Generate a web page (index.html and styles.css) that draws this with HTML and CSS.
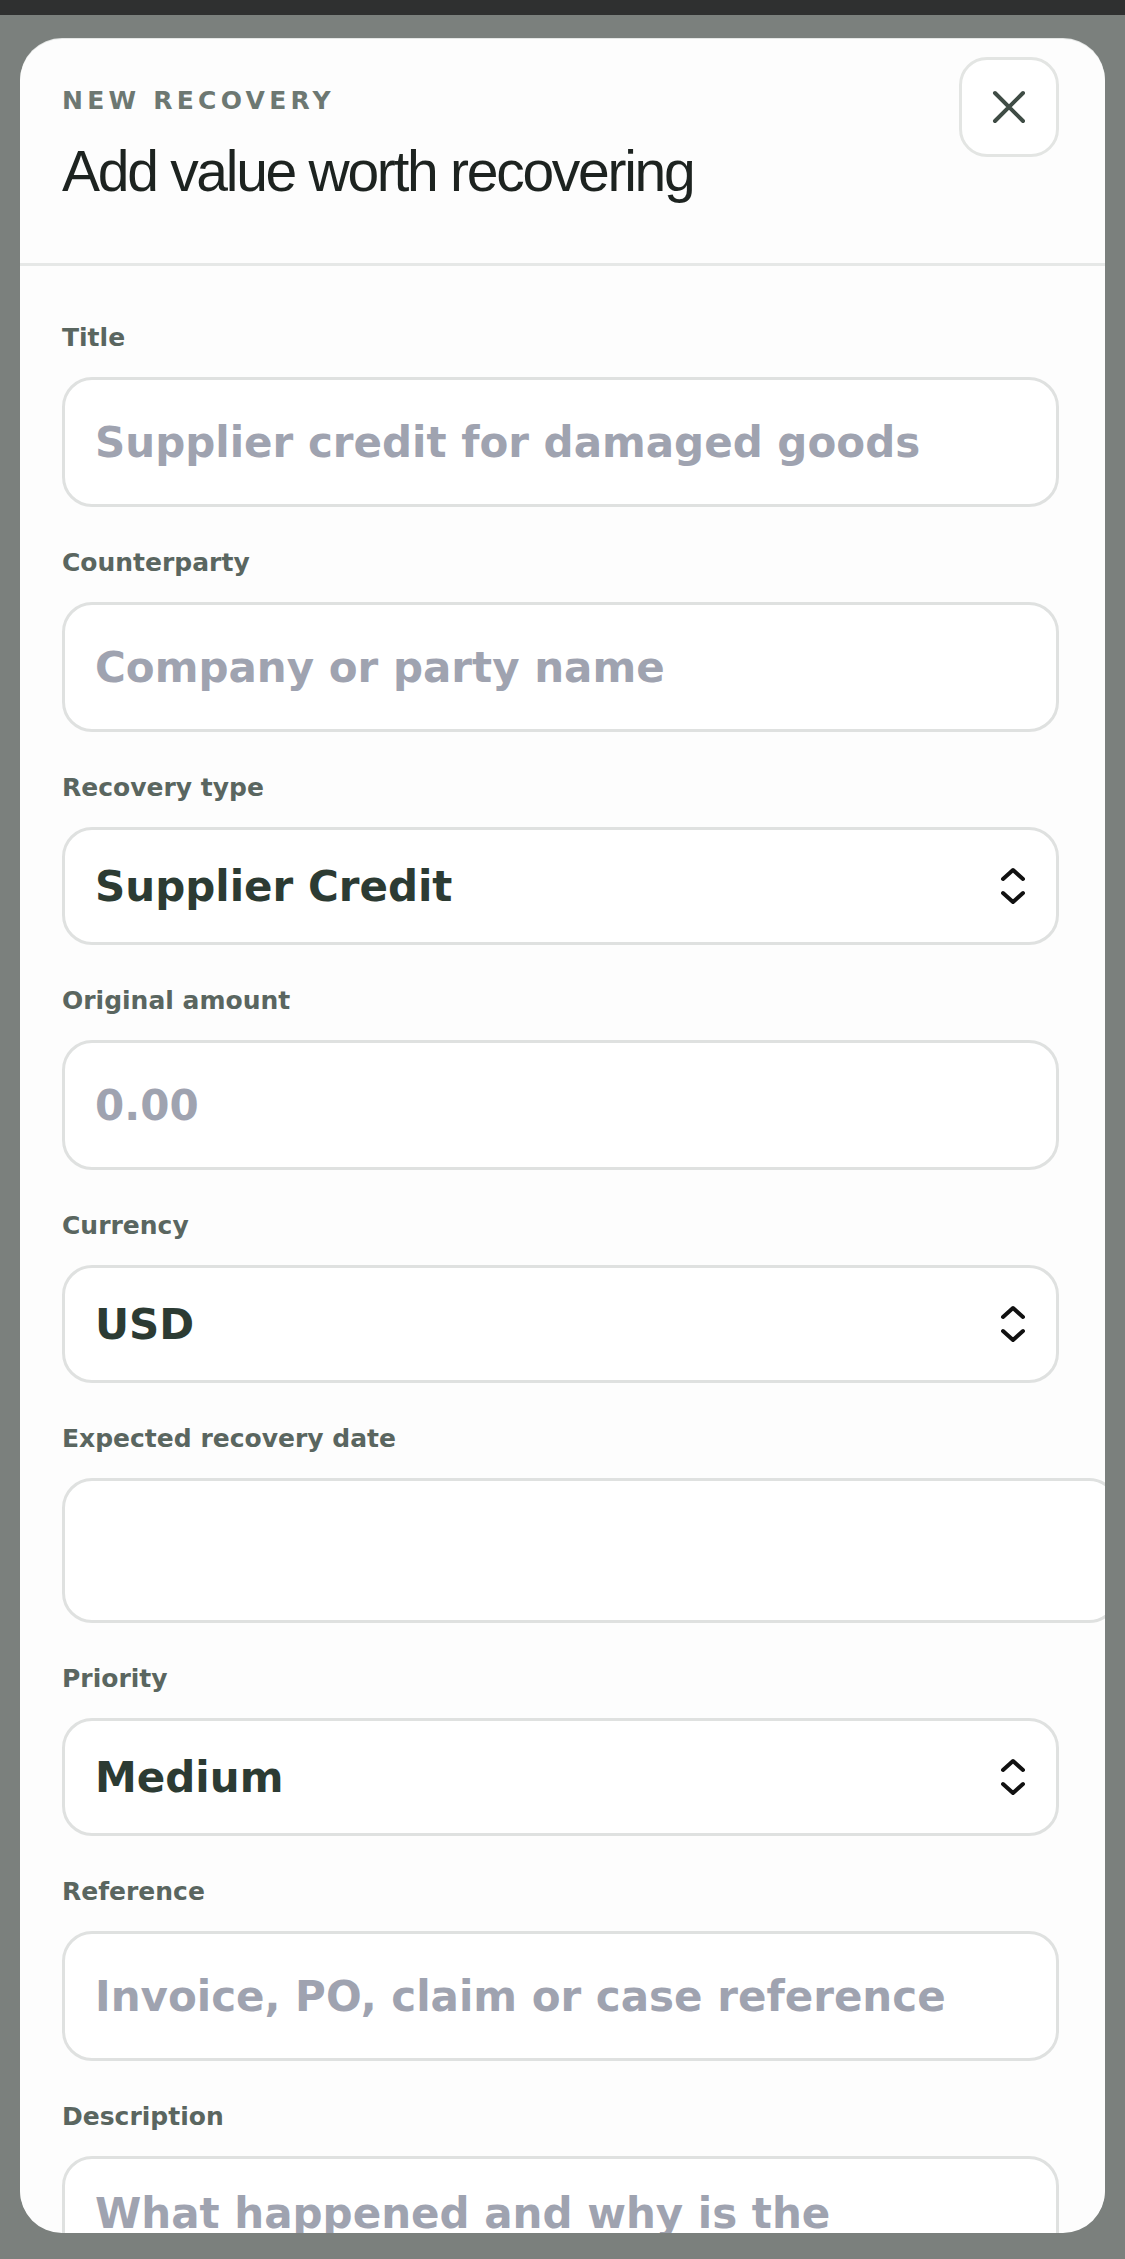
FILE: index.html
```html
<!DOCTYPE html>
<html>
<head>
  <title>New Recovery</title>
  <link rel="stylesheet" href="styles.css">
</head>
<body>

  <div class="status-bar"></div>

  <div class="sheet">
    <div class="sheet-header">
      <div class="heading">
        <p class="eyebrow">NEW RECOVERY</p>
        <h2>Add value worth recovering</h2>
      </div>
      <button class="close-btn" type="button" aria-label="Close">
        <svg width="34" height="34" viewBox="0 0 34 34">
          <path d="M3 3 L31 31 M31 3 L3 31" stroke="#3f4c45" stroke-width="4" stroke-linecap="round" fill="none" />
        </svg>
      </button>
    </div>

    <form class="recovery-form">

      <div class="field">
        <label for="title">Title</label>
        <input type="text" id="title" placeholder="Supplier credit for damaged goods" />
      </div>

      <div class="field">
        <label for="counterparty">Counterparty</label>
        <input type="text" id="counterparty" placeholder="Company or party name" />
      </div>

      <div class="field">
        <label for="type">Recovery type</label>
        <div class="select-wrap">
          <select id="type">
            <option>Supplier Credit</option>
            <option>Refund</option>
            <option>Insurance Claim</option>
          </select>
          <svg class="chevrons" width="26" height="38" viewBox="0 0 26 38">
            <path d="M3 12 L13 3 L23 12 M3 26 L13 35 L23 26" stroke="#111" stroke-width="4" stroke-linecap="round" stroke-linejoin="round" fill="none" />
          </svg>
        </div>
      </div>

      <div class="field">
        <label for="amount">Original amount</label>
        <input type="text" id="amount" placeholder="0.00" />
      </div>

      <div class="field">
        <label for="currency">Currency</label>
        <div class="select-wrap">
          <select id="currency">
            <option>USD</option>
            <option>EUR</option>
            <option>GBP</option>
          </select>
          <svg class="chevrons" width="26" height="38" viewBox="0 0 26 38">
            <path d="M3 12 L13 3 L23 12 M3 26 L13 35 L23 26" stroke="#111" stroke-width="4" stroke-linecap="round" stroke-linejoin="round" fill="none" />
          </svg>
        </div>
      </div>

      <div class="field">
        <label for="expected">Expected recovery date</label>
        <input type="text" id="expected" class="date-input" />
      </div>

      <div class="field">
        <label for="priority">Priority</label>
        <div class="select-wrap">
          <select id="priority">
            <option>Medium</option>
            <option>Low</option>
            <option>High</option>
          </select>
          <svg class="chevrons" width="26" height="38" viewBox="0 0 26 38">
            <path d="M3 12 L13 3 L23 12 M3 26 L13 35 L23 26" stroke="#111" stroke-width="4" stroke-linecap="round" stroke-linejoin="round" fill="none" />
          </svg>
        </div>
      </div>

      <div class="field">
        <label for="reference">Reference</label>
        <input type="text" id="reference" placeholder="Invoice, PO, claim or case reference" />
      </div>

      <div class="field">
        <label for="description">Description</label>
        <textarea id="description" rows="4" placeholder="What happened and why is the counterparty liable?"></textarea>
      </div>

    </form>
  </div>

</body>
</html>
```

FILE: styles.css
```css
body {
  font-family: "DejaVu Sans", sans-serif;
  background: #7b807d;
  margin: 0;
  height: 2259px;
  overflow: hidden;
}

.status-bar {
  height: 15px;
  background: #2f3030;
}

.sheet {
  margin: 24px 20px 0 20px;
  height: 2194px;
  background: #fdfdfd;
  border-radius: 42px;
  overflow: hidden;
  box-shadow: 0 -1px 0 #e4e6e5;
}

.sheet-header {
  display: flex;
  justify-content: space-between;
  align-items: flex-start;
  box-sizing: border-box;
  height: 227px;
  padding: 18px 46px 0 42px;
  border-bottom: 3px solid #e6e8e7;
}

.heading {
  margin-top: 29px;
}

.eyebrow {
  margin: 0;
  font-size: 25px;
  line-height: 30px;
  font-weight: 700;
  letter-spacing: 0.17em;
  color: #6d7872;
}

h2 {
  margin: 23px 0 0 0;
  font-family: "Liberation Sans", Arial, sans-serif;
  font-size: 57px;
  line-height: 64px;
  font-weight: 400;
  letter-spacing: -0.04em;
  color: #1d2320;
}

.close-btn {
  width: 100px;
  height: 100px;
  background: #fff;
  border: 3px solid #e3e5e3;
  border-radius: 28px;
  display: flex;
  align-items: center;
  justify-content: center;
  padding: 0;
}

.recovery-form {
  padding: 57px 46px 0 42px;
}

.field {
  margin-bottom: 41px;
}

.field label {
  display: block;
  font-size: 25px;
  line-height: 30px;
  font-weight: 700;
  color: #5a6660;
  margin-bottom: 24px;
}

.field input,
.field select,
.field textarea {
  display: block;
  box-sizing: border-box;
  width: 100%;
  height: 130px;
  padding: 0 30px;
  font-family: "DejaVu Sans", sans-serif;
  font-size: 42px;
  font-weight: 700;
  color: #2c3b33;
  background: #fff;
  border: 3px solid #dfe1e0;
  border-radius: 30px;
  outline: none;
}

.field input::placeholder,
.field textarea::placeholder {
  color: #9fa3b0;
}

.select-wrap {
  position: relative;
}

.field select {
  height: 118px;
  appearance: none;
  -webkit-appearance: none;
}

.chevrons {
  position: absolute;
  right: 33px;
  top: 40px;
  pointer-events: none;
}

/* the date box runs past the sheet edge, as on the device */
.field .date-input {
  width: calc(100% + 60px);
  height: 145px;
}

.field textarea {
  height: 260px;
  padding: 27px 30px;
  line-height: 56px;
  resize: none;
}
```
